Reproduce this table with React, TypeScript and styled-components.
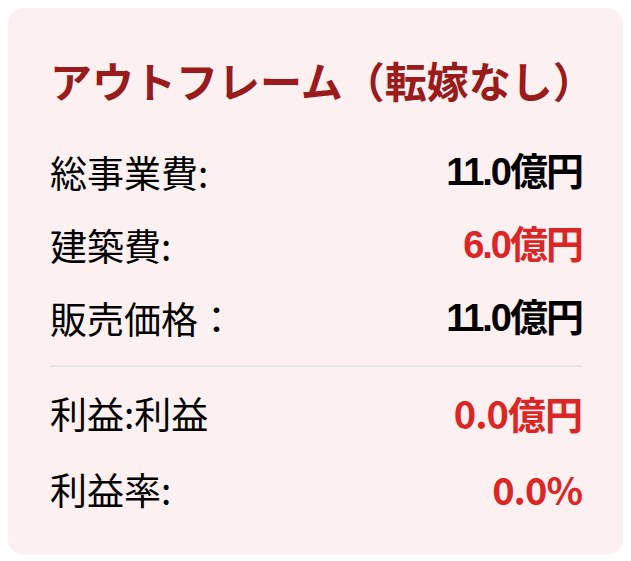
import React from "react";
import styled, { createGlobalStyle } from "styled-components";

const GlobalStyle = createGlobalStyle`
  body {
    margin: 8px;
    background: #fff;
    font-family: "Liberation Sans", "Noto Sans CJK JP", sans-serif;
  }
`;

interface IRow {
  label: string;
  value: string;
  red?: boolean;
}

const topRows: IRow[] = [
  { label: "総事業費:", value: "11.0億円" },
  { label: "建築費:", value: "6.0億円", red: true },
  { label: "販売価格：", value: "11.0億円" },
];

const bottomRows: IRow[] = [
  { label: "利益:利益", value: "0.0億円", red: true },
  { label: "利益率:", value: "0.0%", red: true },
];

export default function App() {
  return (
    <>
      <GlobalStyle />
      <Card>
        <Title>アウトフレーム（転嫁なし）</Title>
        <RowList $gap={25}>
          {topRows.map((r) => (
            <Row key={r.label}>
              <Label>{r.label}</Label>
              <Value $red={r.red}>{r.value}</Value>
            </Row>
          ))}
        </RowList>
        <Divider />
        <RowList $gap={28}>
          {bottomRows.map((r) => (
            <Row key={r.label}>
              <Label>{r.label}</Label>
              <Value $red={r.red} $rounded>
                {r.value}
              </Value>
            </Row>
          ))}
        </RowList>
      </Card>
    </>
  );
}

const Card = styled.div`
  box-sizing: border-box;
  height: 547px;
  padding: 47px 41px 0 42px;
  background: #fdf0f1;
  border-radius: 16px;
`;

const Title = styled.h2`
  margin: 0 0 43px;
  font-family: "Noto Sans CJK JP", sans-serif;
  font-size: 42px;
  font-weight: 700;
  line-height: 50px;
  color: #991b1b;
  white-space: nowrap;
`;

const RowList = styled.div<{ $gap: number }>`
  display: flex;
  flex-direction: column;
  gap: ${(p) => p.$gap}px;
`;

const Row = styled.div`
  display: flex;
  justify-content: space-between;
  align-items: center;
  height: 48px;
`;

const Label = styled.span`
  font-family: "Noto Sans CJK JP", sans-serif;
  font-size: 37px;
  line-height: 48px;
  color: #000;
`;

const Value = styled.span<{ $red?: boolean; $rounded?: boolean }>`
  font-family: ${(p) =>
    p.$rounded
      ? `"Noto Sans CJK JP", sans-serif`
      : `"Liberation Sans", "Noto Sans CJK JP", sans-serif`};
  font-size: 38px;
  line-height: 48px;
  font-weight: 700;
  letter-spacing: ${(p) => (p.$rounded ? "-1px" : "-2px")};
  color: ${(p) => (p.$red ? "#dc2626" : "#000")};
`;

const Divider = styled.hr`
  margin: 23px 0 22px;
  border: none;
  border-top: 2px solid #e5e7eb;
`;
